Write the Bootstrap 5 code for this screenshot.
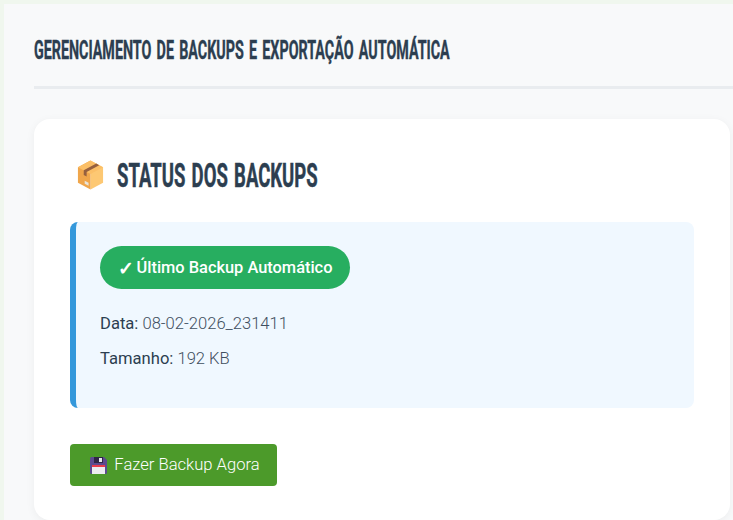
<!DOCTYPE html>
<html lang="pt-BR">
<head>
  <meta charset="UTF-8">
  <meta name="viewport" content="width=device-width, initial-scale=1.0">
  <title>Backups</title>
  <link rel="stylesheet" href="https://cdn.jsdelivr.net/npm/bootstrap@5.3.0/dist/css/bootstrap.min.css">
  <style>
    html, body { height: 520px; overflow: hidden; }
    body { background: #f0f7ee; font-family: Roboto, sans-serif; color: #2c3e50; padding: 4px 0 0 4px; }
    .painel { background: #f8f9fa; height: 516px; padding: 30px 0 0 30px; overflow: hidden; }
    .titulo-pagina { font-family: Roboto, sans-serif; font-weight: 700; font-size: 25px; line-height: 34px; color: #2c3e50; margin: 0; padding-bottom: 18px; border-bottom: 3px solid #e9ecef; text-transform: uppercase; white-space: nowrap; }
    .titulo-pagina span { display: inline-block; word-spacing: 3px; transform: scaleX(.572); transform-origin: left center; -webkit-text-stroke: .4px #2c3e50; }
    .cartao { background: #fff; width: 696px; margin-top: 30px; padding: 32px 36px; border-radius: 16px; box-shadow: 0 2px 10px rgba(0,0,0,.05); height: 401px; }
    .titulo-status { font-family: Roboto, sans-serif; font-weight: 700; font-size: 34px; line-height: 48px; color: #2c3e50; margin: 0 0 23px; text-transform: uppercase; white-space: nowrap; }
    .titulo-status svg { margin: 0 12px 0 6px; flex: none; }
    .titulo-status span { display: inline-block; word-spacing: 3px; transform: scaleX(.545); transform-origin: left center; -webkit-text-stroke: .5px #2c3e50; }
    .caixa-backup { background: #f0f8ff; border-left: 6px solid #3498db; border-radius: 8px; padding: 24px; height: 186px; }
    .selo { background: #27ae60; color: #fff; border-radius: 22px; height: 43px; width: 250px; padding-top: 1px; font-size: 16.4px; font-weight: 500; margin-bottom: 23px; gap: 3px; }
    .selo-check { font-size: 19px; font-weight: 700; line-height: 1; }
    .linha-info { font-size: 16.6px; line-height: 24px; font-weight: 300; margin: 0 0 11px; color: #3f4f60; }
    .linha-info strong { font-weight: 400; color: #2c3e50; }
    .btn-backup { background: #4c9a2a; border: 0; border-radius: 4px; color: #fff; font-size: 16.6px; font-weight: 300; height: 42px; width: 207px; margin-top: 36px; padding: 0 0 0 3px; gap: 7px; }
    .btn-backup:hover { background: #438a25; color: #fff; }
  </style>
</head>
<body>
  <div class="painel">
    <h1 class="titulo-pagina"><span>Gerenciamento de Backups e Exportação Automática</span></h1>

    <div class="cartao">
      <h2 class="titulo-status d-flex align-items-center">
        <!-- caixa -->
        <svg width="29" height="32" viewBox="0 0 30 32" aria-hidden="true">
          <path d="M15 1 28 8v16l-13 7z" fill="#fdc873"/>
          <path d="M15 1 2 8v16l13 7z" fill="#f0a64b"/>
          <path d="M15 1 28 8l-13 7L2 8z" fill="#fbbf67"/>
          <path d="M21 4.200 8 11.200v4.800l3 1.600v-4.800L24 5.800z" fill="#96603f"/>
          <path d="M9 22l4 2v3l-4-2z" fill="#e9e4da"/>
        </svg>
        <span>Status dos Backups</span>
      </h2>

      <div class="caixa-backup">
        <div class="selo d-flex align-items-center justify-content-center"><span class="selo-check">✓</span><span>Último Backup Automático</span></div>
        <p class="linha-info"><strong>Data:</strong> 08-02-2026_231411</p>
        <p class="linha-info"><strong>Tamanho:</strong> 192 KB</p>
      </div>

      <button type="button" class="btn btn-backup d-inline-flex align-items-center justify-content-center">
        <!-- disquete -->
        <svg width="17" height="17" viewBox="0 0 17 17" aria-hidden="true">
          <path d="M1.500 0h12.500l3 3v12.500a1.500 1.500 0 0 1-1.500 1.500h-14a1.500 1.500 0 0 1-1.500-1.500v-14a1.500 1.500 0 0 1 1.500-1.500z" fill="#5c4a8f"/>
          <path d="M4 0h9v6H4z" fill="#2f2546"/>
          <path d="M9 1h3v4H9z" fill="#e9e9ee"/>
          <path d="M2 8h13v9H2z" fill="#ececf0"/>
          <path d="M2 8h13v2H2z" fill="#ea3b4c"/>
        </svg>
        <span>Fazer Backup Agora</span>
      </button>
    </div>
  </div>

  <script src="https://cdn.jsdelivr.net/npm/bootstrap@5.3.0/dist/js/bootstrap.bundle.min.js"></script>
</body>
</html>
